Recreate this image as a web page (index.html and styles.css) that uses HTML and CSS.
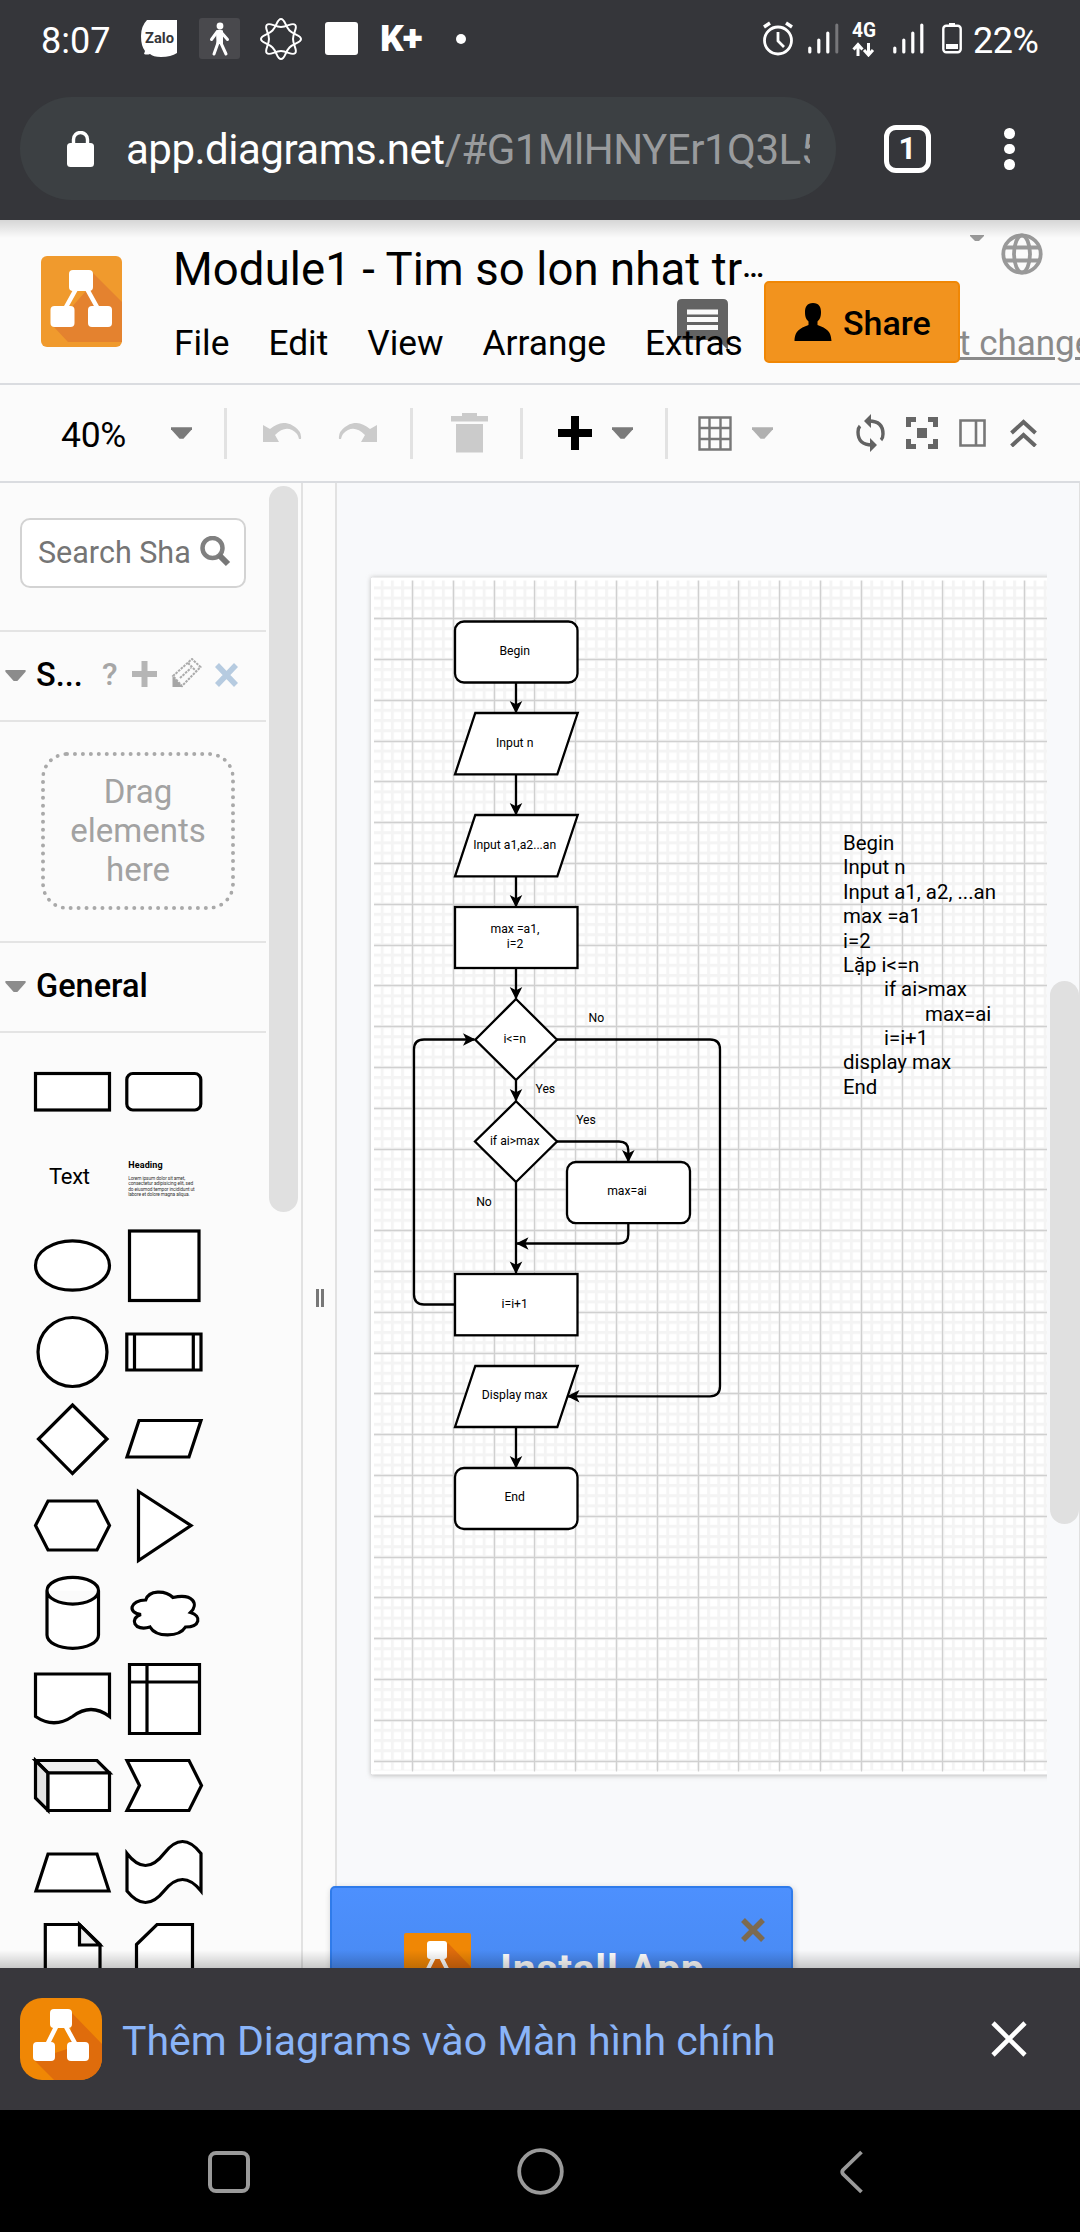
FILE: index.html
```html
<!DOCTYPE html>
<html lang="vi">
<head>
<meta charset="utf-8">
<title>Module1 - diagrams.net</title>
<link rel="stylesheet" href="styles.css">
</head>
<body>
<svg class="defs" width="0" height="0">
  <defs>
    <symbol id="nodes" viewBox="0 0 82 82">
      <path class="logo-shade" d="M52 15 L82 46 V82 H34 L14 62 L50 50 Z"/>
      <path d="M37 27 L27 47 M45 27 L56 47" stroke="#fff" stroke-width="4.5"/>
      <rect x="30" y="11" width="22" height="19" rx="4" fill="#fff"/>
      <rect x="13" y="44" width="22" height="19" rx="4" fill="#fff"/>
      <rect x="47" y="44" width="22" height="19" rx="4" fill="#fff"/>
    </symbol>
    <symbol id="caret" viewBox="0 0 22 12"><path d="M0 0 H22 V2 L13 12 H9 L0 2 Z" fill="currentColor"/></symbol>
  </defs>
</svg>

<header class="status">
  <span class="clock">8:07</span>
  <svg class="zalo" width="36" height="37" viewBox="0 0 36 37"><path d="M6 0 H36 V33 Q30 37 20 37 Q12 37 9 34 Q6 35 3 34 L4 31 Q0 26 0 16 Q0 6 6 0 Z" fill="#fff"/><text x="4" y="22.5" font-size="15" font-weight="700" fill="#35363a" textLength="29" lengthAdjust="spacingAndGlyphs">Zalo</text></svg>
  <svg class="walk" width="41" height="41" viewBox="0 0 41 41"><rect width="41" height="41" rx="3" fill="#49494d"/><circle cx="21" cy="8" r="3.4" fill="#fff"/><path d="M20 22 L15 36 M21 23 L27 36 M18 14 L12.500 21.500 M22 14 L28.500 21.500" stroke="#fff" stroke-width="3" stroke-linecap="round" fill="none"/><path d="M17 12.500 Q20 11 24 12.500 L24 26 H17.500 Z" fill="#fff"/></svg>
  <svg class="star" width="42" height="42" viewBox="-21 -21 42 42"><g fill="none" stroke="#fff" stroke-width="2"><path d="M0 -20 C4 -20 4 -13 8.500 -8.500 C13 -4 20 -4 20 0 C20 4 13 4 8.500 8.500 C4 13 4 20 0 20 C-4 20 -4 13 -8.500 8.500 C-13 4 -20 4 -20 0 C-20 -4 -13 -4 -8.500 -8.500 C-4 -13 -4 -20 0 -20Z"/><path transform="rotate(45)" d="M0 -20 C4 -20 4 -13 8.500 -8.500 C13 -4 20 -4 20 0 C20 4 13 4 8.500 8.500 C4 13 4 20 0 20 C-4 20 -4 13 -8.500 8.500 C-13 4 -20 4 -20 0 C-20 -4 -13 -4 -8.500 -8.500 C-4 -13 -4 -20 0 -20Z"/></g></svg>
  <span class="white-square"></span>
  <span class="kplus">K+</span>
  <span class="dot"></span>
  <svg class="alarm" width="32" height="35" viewBox="0 0 32 35"><g fill="none" stroke="#fff" stroke-width="2.8"><circle cx="16" cy="19.5" r="13.5"/><path d="M2 6 L8 2 M30 6 L24 2" stroke-width="3.4"/><path d="M16 11 V20 L22 26"/></g></svg>
  <svg class="sig1" width="31" height="31" viewBox="0 0 31 31"><path d="M1.8 25 V29 M10.8 17 V29 M19.8 10 V29" stroke="#fff" stroke-width="3.2" stroke-linecap="round"/><path d="M28.8 2 V29" stroke="#77777a" stroke-width="3" stroke-linecap="round"/></svg>
  <svg class="net" width="24" height="36" viewBox="0 0 24 36"><text x="0" y="15.500" font-size="20.500" font-weight="700" fill="#fff" textLength="24" lengthAdjust="spacingAndGlyphs">4G</text><path d="M6 35 V24 M1.500 28.500 L6 23.500 L10.500 28.500 M16.500 22 V33 M12 29 L16.500 34 L21 29" fill="none" stroke="#fff" stroke-width="3"/></svg>
  <svg class="sig2" width="31" height="31" viewBox="0 0 31 31"><path d="M1.800 25 V29 M10.800 17 V29 M19.800 10 V29 M28.800 2 V29" stroke="#fff" stroke-width="3.200" stroke-linecap="round"/></svg>
  <svg class="batt" width="20" height="31" viewBox="0 0 20 31"><rect x="1.300" y="2.800" width="17.400" height="26.500" rx="3" fill="none" stroke="#fff" stroke-width="2.400"/><path d="M7 0 H13 V3 H7Z M4 21 H16 V26 H4Z" fill="#fff"/></svg>
  <span class="pct">22%</span>
</header>

<section class="browser">
  <div class="omnibox">
    <svg width="27" height="36" viewBox="0 0 27 36"><rect y="12" width="27" height="24" rx="3.500" fill="#fff"/><path d="M6.500 13 V8.500 A7 7 0 0 1 20.500 8.500 V13" fill="none" stroke="#fff" stroke-width="3.400"/></svg>
    <div class="url"><span class="host">app.diagrams.net</span><span class="path">/#G1MlHNYEr1Q3L5</span></div>
  </div>
  <div class="tabs">1</div>
  <div class="more"><i></i><i></i><i></i></div>
</section>

<main class="app">
  <div class="menubar">
    <svg class="logo" width="81" height="91" viewBox="0 0 81 91"><rect width="81" height="91" rx="6" fill="#f09a2d"/><path d="M51 16 L81 46 V86 H27 L13 71 L45 35 Z" fill="#e4822f"/><path d="M35 33 L25 51 M46 33 L56 51" stroke="#fff" stroke-width="4.500"/><rect x="28" y="14" width="24" height="21" rx="4" fill="#fff"/><rect x="9.500" y="50" width="24" height="21" rx="4" fill="#fff"/><rect x="47" y="50" width="24" height="21" rx="4" fill="#fff"/></svg>
    <div class="titles">
      <div class="doc-title">Module1 - Tim so lon nhat tr<span class="ell">…</span></div>
      <nav class="menus"><span>File</span><span>Edit</span><span>View</span><span>Arrange</span><span>Extras</span></nav>
    </div>
    <svg class="comment" width="51" height="51" viewBox="0 0 51 51"><path d="M5 0 H46 Q51 0 51 5 V51 L41 41 H5 Q0 41 0 36 V5 Q0 0 5 0Z" fill="#636363"/><path d="M10 13 H41 M10 20.500 H41 M10 28.500 H41" stroke="#fbfbfb" stroke-width="5"/></svg>
    <div class="share"><svg width="38" height="38" viewBox="0 0 38 38"><path d="M19 0 C25 0 27 4 27 9 C27 14 26 16 23.500 18.500 V22 C30 25 37 26 37.500 38 H0.500 C1 26 8 25 14.500 22 V18.500 C12 16 11 14 11 9 C11 4 13 0 19 0Z"/></svg><span>Share</span></div>
    <span class="changed">t change</span>
    <svg class="mini-caret" width="14" height="7" viewBox="0 0 14 7"><path d="M0 0 H14 V1 L9 6 H5 L0 1Z" fill="#999"/></svg>
    <svg class="globe" width="42" height="42" viewBox="0 0 42 42"><g fill="none" stroke="#999" stroke-width="3.800"><circle cx="21" cy="21" r="18.700"/><ellipse cx="21" cy="21" rx="8" ry="18.500"/><path d="M4 14.500 H38 M4 27.500 H38"/></g></svg>
  </div>

  <div class="toolbar">
    <span class="zoom">40%</span>
    <svg class="c1" width="21" height="12"><use href="#caret"/></svg>
    <i class="sep s1"></i>
    <svg class="undo" width="40" height="20" viewBox="0 0 40 20"><path d="M1 2 L8 6 Q22 -5 33 4 Q40 9 39 16 H37 Q36 10 30 7 Q22 3 13 12 L17 19 H1Z" fill="#cbcbcb"/></svg>
    <svg class="redo" width="40" height="20" viewBox="0 0 40 20"><path d="M39 2 L32 6 Q18 -5 7 4 Q0 9 1 16 H3 Q4 10 10 7 Q18 3 27 12 L23 19 H39Z" fill="#cbcbcb"/></svg>
    <i class="sep s2"></i>
    <svg class="trash" width="37" height="40" viewBox="0 0 37 40"><path d="M11 0 H26 V3 H37 V8.500 H0 V3 H11Z M5 11 H32 V39.500 H5Z" fill="#cbcbcb"/></svg>
    <i class="sep s3"></i>
    <svg class="plus" width="34" height="34" viewBox="0 0 34 34"><path d="M17 0 V34 M0 17 H34" stroke="#000" stroke-width="8"/></svg>
    <svg class="c2" width="21" height="12"><use href="#caret"/></svg>
    <i class="sep s4"></i>
    <svg class="grid" width="34" height="35" viewBox="0 0 34 35"><path d="M1.500 1.500 H32.500 V33.500 H1.500Z M11.500 1 V34 M22.500 1 V34 M1 12 H33 M1 23 H33" fill="none" stroke="#777" stroke-width="2.400"/></svg>
    <svg class="c3" width="21" height="12"><use href="#caret"/></svg>
    <svg class="sync" width="29" height="38" viewBox="0 0 29 38"><g fill="none" stroke="#626262" stroke-width="3.400"><path d="M13 7 Q27 7 27 20 Q27 24 25 26"/><path d="M16 31 Q2 31 2 18 Q2 14 4 12"/></g><path d="M15 0 V14 L8 7Z M14 24 V38 L21 31Z" fill="#626262"/></svg>
    <svg class="full" width="32" height="32" viewBox="0 0 32 32"><path d="M2.500 10 V2.500 H10 M22 2.500 H29.500 V10 M29.500 22 V29.500 H22 M10 29.500 H2.500 V22" fill="none" stroke="#666" stroke-width="5"/><path d="M11 11 H21 V21 H11Z" fill="#666"/></svg>
    <svg class="panel" width="27" height="28" viewBox="0 0 27 28"><path d="M1.500 1.500 H25.500 V26.500 H1.500Z M17 1 V27" fill="none" stroke="#777" stroke-width="2.600"/></svg>
    <svg class="chev" width="27" height="28" viewBox="0 0 27 28"><path d="M1.500 14 L13.500 3 L25.500 14 M1.500 27 L13.500 16 L25.500 27" fill="none" stroke="#666" stroke-width="4"/></svg>
  </div>

  <div class="workspace">
    <aside class="sidebar">
      <div class="search-row"><div class="search"><span>Search Sha</span><svg width="31" height="31" viewBox="0 0 31 31"><circle cx="12.500" cy="12" r="10" fill="none" stroke="#808080" stroke-width="4.500"/><path d="M19 19 L28 28" stroke="#777" stroke-width="6"/></svg></div></div>
      <div class="section"><svg width="21" height="11"><use href="#caret"/></svg><b>S...</b>
        <svg class="tools" width="138" height="30" viewBox="0 0 138 30"><text x="1" y="27" font-size="32" font-weight="500" fill="#a6a6a6">?</text><path d="M43.500 3 V29 M31 16 H56" stroke="#b5b5b5" stroke-width="6"/><path d="M72 18 L91 1 L99.500 9 L81 28 Z M87 5 L95 13 M79 20 L90 10" fill="none" stroke="#ababab" stroke-width="2" stroke-dasharray="2.500 1"/><path d="M71.500 18 L82 29 H71.500Z" fill="#a6a6a6"/><path d="M116 7 L135 27 M135 7 L116 27" stroke="#b6cbe0" stroke-width="5.500"/></svg></div>
      <div class="scratch"><div class="drop">Drag<br>elements<br>here</div></div>
      <div class="section general"><svg width="21" height="11"><use href="#caret"/></svg><b>General</b></div>
      <svg class="shapes" width="266" height="935" viewBox="0 1033 266 935">
        <g fill="#fff" stroke="#000" stroke-width="3.200">
          <rect x="35.500" y="1073.500" width="74" height="36.500"/>
          <rect x="126.800" y="1073.500" width="74" height="36.500" rx="6"/>
          <ellipse cx="72.500" cy="1265.500" rx="37" ry="24.700"/>
          <rect x="129.500" y="1231" width="69.500" height="69.500"/>
          <circle cx="72.500" cy="1352" r="34.500"/>
          <path d="M126.800 1334 H201 V1370 H126.800Z M134.500 1334 V1370 M193.300 1334 V1370"/>
          <path d="M72.500 1405 L107 1439 L72.500 1473.500 L38.500 1439Z"/>
          <path d="M139 1420.500 H201 L189 1457 H127Z"/>
          <path d="M48 1501 H97 L109.500 1525.500 L97 1550 H48 L35.500 1525.500Z"/>
          <path d="M138.500 1491.500 L191 1525.500 L138.500 1560.500Z"/>
          <path d="M47 1590.700 A25.700 13.300 0 0 1 98.500 1590.700 V1635 A25.700 13.300 0 0 1 47 1635Z M47 1590.700 A25.700 13.300 0 0 0 98.500 1590.700"/>
          <path d="M145.700 1600 C130 1600 127 1613 141 1614.500 C129 1618 134 1632 150 1627 C156 1637.500 179 1637.500 185.500 1627 C200 1627 202 1616 190.500 1612.500 C199 1604 193 1593 173 1597.500 C165 1590 149 1590 145.700 1600Z"/>
          <path d="M35.500 1674 H109.500 V1716.500 Q91 1702.500 72.500 1716.500 Q54 1729 35.500 1716.500Z"/>
          <path d="M129.500 1664.500 H199.500 V1733.500 H129.500Z M147 1664.500 V1733.500 M129.500 1682 H199.500"/>
          <path d="M35.500 1760.500 H97 L109.500 1773 H48Z" fill="#f0f0f0"/>
          <path d="M35.500 1760.500 L48 1773 V1810.500 L35.500 1798Z" fill="#e3e3e3"/>
          <path d="M48 1773 H109.500 V1810.500 H48Z"/>
          <path d="M127 1760.500 H189 L201.500 1785.500 L189 1810.500 H127 L139.500 1785.500Z"/>
          <path d="M48 1854 H97 L109 1891 H36Z"/>
          <path d="M127 1853.500 Q145.500 1877.500 164 1853.500 Q182.500 1829.500 201 1853.500 V1891 Q182.500 1868 164 1891 Q145.500 1914 127 1891Z"/>
          <path d="M45.300 1980 V1924.500 H79.500 L100 1944.500 V1980"/>
          <path d="M79.500 1924.500 V1945 H100Z" fill="#f0f0f0"/>
          <path d="M136.500 1980 V1944.500 L157 1924.500 H192.500 V1980"/>
        </g>
        <text x="49" y="1184" font-size="22" textLength="41">Text</text>
        <text x="128.200" y="1168.300" font-size="9" font-weight="700" textLength="34.500">Heading</text>
        <g font-size="4.800" fill="#333"><text x="128.200" y="1179.600" textLength="57">Lorem ipsum dolor sit amet,</text><text x="128.200" y="1185" textLength="65">consectetur adipisicing elit, sed</text><text x="128.200" y="1190.600" textLength="66.500">do eiusmod tempor incididunt ut</text><text x="128.200" y="1196" textLength="61.500">labore et dolore magna aliqua.</text></g>
      </svg>
      <i class="side-scroll"></i>
    </aside>
    <div class="splitter"><i></i><i></i></div>
    <div class="canvas">
      <svg width="743" height="1485" viewBox="337 483 743 1485">
        <defs>
          <pattern id="minor" x="412.800" y="618.500" width="10.200" height="10.200" patternUnits="userSpaceOnUse"><path d="M0 1.500 H10.200 M1.500 0 V10.200" stroke="#f4f4f4" stroke-width="3"/></pattern>
          <marker id="head" markerUnits="userSpaceOnUse" markerWidth="15" markerHeight="15" refX="12" refY="7" orient="auto"><path d="M13 7 L0.500 0.700 L3.700 7 L0.500 13.300Z"/></marker>
          <filter id="soft" x="-5%" y="-5%" width="110%" height="110%"><feGaussianBlur stdDeviation="2.500"/></filter>
          <clipPath id="view"><rect x="337" y="483" width="710" height="1485"/></clipPath>
        </defs>
        <g clip-path="url(#view)">
          <rect x="371" y="577.500" width="720" height="1198" fill="#b8b8b8" filter="url(#soft)"/>
          <rect x="372" y="578" width="720" height="1196" fill="#fff"/>
          <rect x="374" y="580" width="700" height="1192" fill="url(#minor)" transform="translate(-1.500 -1.500)"/>
          <path id="major" d="" stroke="#d0d0d0" stroke-width="1.300" fill="none"/>
          <path d="M372.500 578 V1774 M372 579 H1092 M372 1773 H1092" stroke="#fff" stroke-width="3"/>
        </g>
        <g fill="#fff" stroke="#000" stroke-width="2.300">
          <rect x="455" y="621.500" width="122.500" height="61" rx="9"/>
          <path d="M475.300 713 H577.700 L557.300 774.300 H455Z"/>
          <path d="M475.300 815 H577.700 L557.300 876.300 H455Z"/>
          <rect x="455" y="907" width="122.500" height="61"/>
          <path d="M516 999 L557 1039.700 L516 1080 L475.300 1039.700Z"/>
          <path d="M516 1101.300 L557 1141.500 L516 1182 L475 1141.500Z"/>
          <rect x="567" y="1162" width="123" height="61.200" rx="9"/>
          <rect x="455" y="1274" width="122.500" height="61.300"/>
          <path d="M475.300 1366 H577.700 L557.300 1427 H455Z"/>
          <rect x="455" y="1468" width="122.500" height="61" rx="9"/>
        </g>
        <g class="edges" fill="none" stroke="#000" stroke-width="2.300">
          <path d="M516 682 V712.500"/><path d="M516 774 V814.500"/><path d="M516 876 V906.500"/><path d="M516 968 V998.500"/>
          <path d="M516 1080 V1100.500"/><path d="M516 1182 V1273"/><path d="M516 1427 V1467.500"/>
          <path d="M557 1141.500 H619 Q628.300 1141.500 628.300 1150.500 V1161.500"/>
          <path d="M628.300 1223 V1234.500 Q628.300 1243.500 619 1243.500 H517"/>
          <path d="M455 1304.500 H424 Q414 1304.500 414 1294.500 V1049.500 Q414 1039.500 424 1039.500 H474.500"/>
          <path d="M557 1039.500 H710 Q720 1039.500 720 1049.500 V1386.300 Q720 1396.300 710 1396.300 H568"/>
        </g>
        <g class="labels" font-size="12.200" text-anchor="middle">
          <text x="514.700" y="655">Begin</text><text x="514.700" y="747">Input n</text><text x="514.700" y="849">Input a1,a2...an</text>
          <text x="515" y="933">max =a1,</text><text x="515" y="948">i=2</text><text x="514.700" y="1043">i&lt;=n</text>
          <text x="596.300" y="1022">No</text><text x="545.300" y="1093">Yes</text><text x="586" y="1124">Yes</text><text x="484" y="1206">No</text>
          <text x="514.700" y="1145">if ai&gt;max</text><text x="627" y="1195">max=ai</text><text x="514.700" y="1308">i=i+1</text><text x="514.700" y="1399">Display max</text><text x="514.700" y="1501">End</text>
        </g>
        <g class="labels" font-size="20.400">
          <text x="843" y="850">Begin</text><text x="843" y="874.400">Input n</text><text x="843" y="898.800">Input a1, a2, ...an</text><text x="843" y="923.200">max =a1</text><text x="843" y="947.500">i=2</text><text x="843" y="971.900">Lặp i&lt;=n</text><text x="884" y="996.300">if ai&gt;max</text><text x="925" y="1020.600">max=ai</text><text x="884" y="1045">i=i+1</text><text x="843" y="1069.400">display max</text><text x="843" y="1093.800">End</text>
        </g>
      </svg>
      <i class="canvas-scroll"></i>
    </div>
    <div class="install">
      <svg class="install-logo" width="67" height="82" viewBox="0 0 67 82"><rect width="67" height="82" rx="2" fill="#f08705"/><path d="M44 10 L67 34 V82 H20 V42Z" fill="#df6c0c"/><path d="M30 24 L20 44 M37 24 L47 44" stroke="#fff" stroke-width="4"/><rect x="23" y="8" width="20" height="18" rx="3" fill="#fff"/></svg>
      <b>Install App</b>
      <svg class="install-x" width="24" height="24" viewBox="0 0 24 24"><path d="M2 2 L22 22 M22 2 L2 22" stroke="#7c6a50" stroke-width="5.500"/></svg>
    </div>
  </div>
</main>

<section class="banner">
  <div class="app-icon"><svg width="82" height="82"><use href="#nodes"/></svg></div>
  <span>Thêm Diagrams vào Màn hình chính</span>
  <svg class="close" width="36" height="36" viewBox="0 0 36 36"><path d="M2 2 L34 34 M34 2 L2 34" stroke="#fff" stroke-width="4.600"/></svg>
</section>
<footer class="navkeys">
  <svg width="42" height="42" viewBox="0 0 42 42"><rect x="2" y="2" width="38" height="38" rx="6" fill="none" stroke="#9a9a9a" stroke-width="4"/></svg>
  <svg width="47" height="47" viewBox="0 0 47 47"><circle cx="23.500" cy="23.500" r="21.300" fill="none" stroke="#9a9a9a" stroke-width="3.800"/></svg>
  <svg width="25" height="44" viewBox="0 0 25 44"><path d="M22.500 2 L4 20 Q2.500 22 4 24 L22.500 42" fill="none" stroke="#9a9a9a" stroke-width="3.800"/></svg>
</footer>
<script src="grid.js"></script>
</body>
</html>
```
FILE: grid.js
```js
// Major grid lines of the drawing page, one every 40.8px
let d = '';
for (let i = -1; i < 17; i++) {
  const x = Math.floor(412.5 + i * 40.8) + 0.5;
  if (x > 374) d += `M${x} 580V1772`;
}
for (let i = 0; i < 29; i++) {
  d += `M374 ${Math.floor(618.6 + i * 40.8) + 0.5}H1060`;
}
document.getElementById('major').setAttribute('d', d);
```
FILE: styles.css
```css
* { box-sizing: border-box; }
html, body { margin: 0; }
body {
  width: 1080px; height: 2232px; overflow: hidden;
  display: flex; flex-direction: column;
  font-family: Roboto, sans-serif; background: #000;
}
svg { display: block; flex: none; }
.defs { position: absolute; }
i { display: block; flex: none; }

/* status bar */
.status { height: 77px; background: #35363a; color: #fff; display: flex; align-items: center; padding-left: 41px; flex: none; font-size: 36px; }
.clock { width: 100px; padding-top: 4px; }
.walk { margin-left: 22px; }
.star { margin-left: 20px; }
.white-square { width: 33px; height: 33px; background: #fff; border-radius: 3px; margin-left: 23px; }
.kplus { font-weight: 900; font-size: 37px; letter-spacing: -1px; width: 44px; margin-left: 22px; white-space: nowrap; }
.dot { width: 10px; height: 10px; border-radius: 5px; background: #fff; margin-left: 32px; }
.alarm { margin-left: 296px; }
.sig1 { margin-left: 14px; }
.net { margin-left: 13px; }
.sig2 { margin-left: 17px; }
.batt { margin-left: 18px; }
.pct { margin-left: 11px; padding-top: 4px; letter-spacing: -.5px; }

/* browser bar */
.browser { height: 143px; flex: none; background: #35363a; display: flex; align-items: flex-start; padding: 20px 0 0 20px; }
.omnibox { width: 816px; height: 103px; border-radius: 52px; background: #3c4043; display: flex; align-items: center; padding-left: 47px; }
.url { width: 684px; margin-left: 32px; padding-top: 2px; overflow: hidden; white-space: nowrap; font-size: 42px; letter-spacing: -.5px; color: #fff; }
.path { color: #999b9d; }
.tabs { width: 47px; height: 48px; margin: 28px 0 0 48px; border: 5px solid #fff; border-radius: 12px; color: #fff; font-size: 31px; font-weight: 700; line-height: 38px; text-align: center; }
.more { display: flex; flex-direction: column; gap: 5px; margin: 31px 0 0 73px; }
.more i { width: 10.500px; height: 10.500px; border-radius: 50%; background: #fff; }

/* editor */
.app { height: 1748px; flex: none; position: relative; background: #fbfbfb; overflow: hidden; }
.app::before, .app::after { content: ""; position: absolute; left: 0; right: 0; height: 18px; z-index: 5; }
.app::before { top: 0; background: linear-gradient(rgba(0,0,0,.15), rgba(0,0,0,0)); }
.app::after { bottom: 0; background: linear-gradient(rgba(0,0,0,0), rgba(0,0,0,.2)); }
.menubar { height: 165px; border-bottom: 2px solid #dadce0; position: relative; display: flex; padding: 36px 0 0 41px; }
.titles { margin-left: 51px; position: relative; z-index: 1; white-space: nowrap; }
.doc-title { font-size: 45.500px; line-height: 54px; height: 54px; margin-top: -13px; letter-spacing: .1px; }
.ell { font-size: 31px; font-weight: 500; letter-spacing: 0; vertical-align: 8px; line-height: 20px; }
.menus { display: flex; gap: 39px; font-size: 35.300px; line-height: 42px; margin-top: 25px; padding-left: 1px; }
.comment { position: absolute; left: 677px; top: 79px; }
.share { position: absolute; left: 764px; top: 61px; width: 196px; height: 82px; background: #f2931e; border: 2px solid #f08705; border-radius: 5px; display: flex; align-items: center; padding-left: 28px; font-size: 34px; font-weight: 500; z-index: 2; }
.share span { margin-left: 11px; padding-top: 2px; }
.changed { position: absolute; left: 959px; top: 103px; font-size: 35px; line-height: 42px; color: #8a8a8a; text-decoration: underline; text-decoration-thickness: 3px; white-space: nowrap; }
.mini-caret { position: absolute; left: 970px; top: 15px; }
.globe { position: absolute; left: 1001px; top: 13px; }

.toolbar { height: 98px; border-bottom: 2px solid #dadce0; display: flex; align-items: center; padding-left: 61px; }
.zoom { font-size: 35.500px; width: 110px; padding-top: 3px; letter-spacing: -.3px; }
.c1, .c2 { color: #7a7a7a; }
.c3 { color: #b0b0b0; }
.sep { width: 3px; height: 51px; background: #e2e2e2; }
.s1 { margin-left: 32px; }
.undo { margin-left: 35px; }
.redo { margin-left: 36px; }
.s2 { margin-left: 32px; }
.trash { margin-left: 38px; }
.s3 { margin-left: 32px; }
.plus { margin-left: 35px; }
.c2 { margin-left: 20px; }
.s4 { margin-left: 32px; }
.grid { margin-left: 30px; }
.c3 { margin-left: 20px; }
.sync { margin-left: 83px; }
.full { margin-left: 21px; }
.panel { margin-left: 21px; }
.chev { margin-left: 24px; }

.workspace { height: 1485px; display: flex; position: relative; }
.sidebar { width: 303px; border-right: 2px solid #e2e2e2; position: relative; overflow: hidden; }
.search-row { width: 266px; height: 149px; border-bottom: 2px solid #e4e4e4; padding: 35px 0 0 20px; }
.search { width: 226px; height: 70px; border: 2px solid #d3d3d3; border-radius: 10px; background: #fff; display: flex; align-items: center; padding: 0 0 1px 16px; font-size: 30.500px; color: #757575; }
.search span { width: 162px; white-space: nowrap; }
.search svg { margin-top: -3px; }
.section { width: 266px; height: 90px; border-bottom: 2px solid #e4e4e4; display: flex; align-items: center; padding: 0 0 3px 5px; color: #8c8c8c; }
.section svg:first-child { margin-top: 2px; }
.section b { font-size: 32.500px; font-weight: 500; color: #000; margin-left: 10px; width: 65px; white-space: nowrap; }
.tools { margin-top: -4px; }
.scratch { width: 266px; height: 221px; border-bottom: 2px solid #e4e4e4; padding: 30px 0 0 41px; }
.drop { width: 194px; height: 158px; border: 4.500px dotted #a9a9a9; border-radius: 26px; color: #a2a2a2; font-size: 33px; line-height: 39px; text-align: center; padding-top: 16px; }
.side-scroll { position: absolute; left: 269px; top: 3px; width: 29px; height: 726px; border-radius: 15px; background: #e0e0e0; }
.splitter { width: 34px; border-right: 2px solid #e2e2e2; display: flex; gap: 2px; padding: 806px 0 0 13px; }
.splitter i { width: 3px; height: 18px; background: #777; }
.canvas { width: 743px; background: #f8f9fb; position: relative; border-right: 1px solid #e0e0e0; }
.edges path { marker-end: url(#head); }
.canvas-scroll { position: absolute; left: 713px; top: 498px; width: 29px; height: 543px; border-radius: 15px; background: #e0e0e0; }
.install { position: absolute; left: 330px; top: 1403px; width: 463px; height: 130px; background: linear-gradient(#4d90fe, #4787ed); border: 2px solid #2f7bea; border-radius: 5px; box-shadow: 1px 2px 6px rgba(0,0,0,.2); display: flex; padding: 45px 0 0 72px; color: #fff; }
.install b { font-size: 41px; letter-spacing: .7px; line-height: 48px; font-weight: 700; margin: 12px 0 0 29px; width: 208px; white-space: nowrap; }
.install-x { margin: -15px 0 0 33px; }

/* install prompt and navigation */
.banner { height: 142px; flex: none; background: #38373c; display: flex; align-items: center; padding: 0 53px 0 20px; color: #8ab4f8; font-size: 41px; }
.app-icon { width: 82px; height: 82px; border-radius: 22px; overflow: hidden; background: #f08705; }
.logo-shade { fill: #df6c0c; }
.banner span { margin-left: 20px; padding-top: 3px; white-space: nowrap; }
.close { margin-left: auto; }
.navkeys { height: 122px; background: #000; display: flex; align-items: center; padding: 1px 0 0 208px; }
.navkeys svg:nth-child(2) { margin-left: 267px; }
.navkeys svg:nth-child(3) { margin-left: 275px; }
```
